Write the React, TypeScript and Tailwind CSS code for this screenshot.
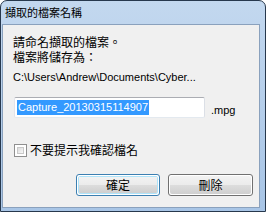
import React from "react";

const cjk = { fontFamily: '"Noto Sans CJK TC", "Noto Sans", sans-serif' };
const latin = { fontFamily: '"Liberation Sans", Arial, sans-serif' };

export default function App() {
  return (
    <div className="w-[266px] h-[212px] bg-white">
      <div className="w-[266px] h-[212px] flex flex-col rounded-t-[7px] border border-[#27384d] bg-gradient-to-b from-[#c3d8ef] to-[#a8c5e6] overflow-hidden">
        <div className="h-[23px] shrink-0 flex items-center pl-[4px] text-[11px] text-black leading-none" style={cjk}>
          擷取的檔案名稱
        </div>
        <div className="flex-1 ml-[1px] mr-[5px] mb-[3px] bg-[#f0f0f0] border border-[#8aa1bd] flex flex-col pl-[10px] pr-[6px]">
          <div className="mt-[9px] text-[12px] leading-[15px] text-black" style={cjk}>
            <div>請命名擷取的檔案。</div>
            <div>檔案將儲存為：</div>
          </div>
          <div className="mt-[7px] text-[11px] leading-[13px] text-black whitespace-nowrap" style={latin}>
            C:\Users\Andrew\Documents\Cyber...
          </div>
          <div className="mt-[13px] flex items-end gap-[6px]">
            <div className="w-[191px] h-[21px] ml-[1px] rounded-[2px] border border-[#abadb3] border-l-[#e2e3ea] border-r-[#dbdfe6] border-b-[#e3e9ef] bg-white flex items-center pl-[2px]">
              <span className="bg-[#3399ff] text-white text-[11px] leading-[15px] px-[1px] whitespace-nowrap" style={latin}>
                Capture_20130315114907
              </span>
            </div>
            <span className="text-[11px] leading-[13px] mb-[1px] text-black" style={latin}>.mpg</span>
          </div>
          <div className="mt-[25px] flex items-center gap-[3px]">
            <div className="w-[13px] h-[13px] ml-[1px] border border-[#8f8f8f] bg-white p-[2px]">
              <div className="w-full h-full border border-[#c9c9c9] bg-gradient-to-br from-[#dcdcdc] to-[#f8f8f8]" />
            </div>
            <span className="text-[12px] leading-[14px] text-black" style={cjk}>不要提示我確認檔名</span>
          </div>
          <div className="mt-[17px] flex justify-end gap-[8px] pr-[0px]">
            <button className="w-[84px] h-[22px] rounded-[3px] border border-[#3c7fb1] bg-white p-[1px]">
              <div className="w-full h-full rounded-[2px] border border-[#aee3f9] flex flex-col overflow-hidden relative">
                <div className="flex-1 bg-gradient-to-b from-[#f2f2f2] to-[#ebebeb]" />
                <div className="flex-1 bg-gradient-to-b from-[#dddddd] to-[#cfcfcf]" />
                <span className="absolute inset-0 flex items-center justify-center text-[12px] text-black leading-none" style={cjk}>確定</span>
              </div>
            </button>
            <button className="w-[85px] h-[22px] rounded-[3px] border border-[#707070] bg-white p-[1px]">
              <div className="w-full h-full rounded-[2px] flex flex-col overflow-hidden relative">
                <div className="flex-1 bg-gradient-to-b from-[#f2f2f2] to-[#ebebeb]" />
                <div className="flex-1 bg-gradient-to-b from-[#dddddd] to-[#cfcfcf]" />
                <span className="absolute inset-0 flex items-center justify-center text-[12px] text-black leading-none" style={cjk}>刪除</span>
              </div>
            </button>
          </div>
        </div>
      </div>
    </div>
  );
}
